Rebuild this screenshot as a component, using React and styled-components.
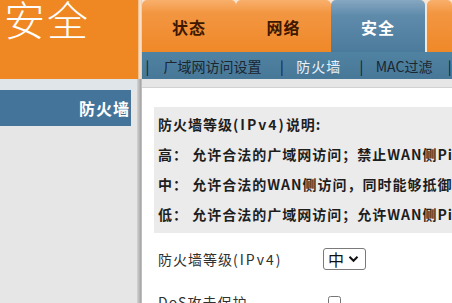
import React from "react";
import styled, { createGlobalStyle } from "styled-components";

const Global = createGlobalStyle`
  html, body { margin: 0; padding: 0; background: #ffffff; }
  body {
    width: 452px; height: 303px; overflow: hidden;
    font-family: "Noto Sans CJK SC", "Noto Sans", sans-serif;
  }
`;

const Page = styled.div`
  width: 452px;
  height: 303px;
  display: flex;
  flex-direction: column;
  overflow: hidden;
`;

const Header = styled.header`
  display: flex;
  height: 79px;
  flex: none;
`;

const Logo = styled.div`
  width: 138px;
  background: #ef8722;
  color: #ffffff;
  font-family: "Noto Sans CJK SC", serif;
  font-weight: 300;
  font-size: 41px;
  line-height: 40px;
  letter-spacing: 2px;
  padding-left: 4px;
  box-sizing: border-box;
  & > span { display: block; margin-top: -2px; }
`;

const HeaderDivider = styled.div`
  width: 4px;
  background: linear-gradient(to right, #f2b57a, #fbe6d2, #e7c9ad);
`;

const Nav = styled.nav`
  flex: 1;
  display: flex;
  flex-direction: column;
  min-width: 0;
`;

const Tabs = styled.div`
  display: flex;
  height: 52px;
  flex: none;
  background: #f7e6d6;
`;

const Tab = styled.div`
  width: ${(p) => p.$w}px;
  flex: ${(p) => (p.$grow ? 1 : "none")};
  margin-left: ${(p) => p.$ml || 0}px;
  border-radius: 5px 5px 0 0;
  display: flex;
  align-items: center;
  justify-content: center;
  padding-top: 2px;
  box-sizing: border-box;
  font-size: 16px;
  font-weight: 700;
  letter-spacing: 1px;
  color: ${(p) => (p.$active ? "#ffffff" : "#3e1800")};
  background: ${(p) =>
    p.$active
      ? "linear-gradient(#86a7c1 0%, #5f8bab 30%, #4b7b9c 100%)"
      : "linear-gradient(#f8b06c 0%, #f39642 25%, #ef8828 100%)"};
`;

const SubNav = styled.div`
  height: 27px;
  flex: none;
  background: linear-gradient(#5082a2, #487898);
  display: flex;
  align-items: center;
  padding-left: 3px;
  font-size: 14px;
  color: #1b2630;
  white-space: nowrap;
`;

const Sep = styled.span`
  width: 6px;
  text-align: center;
  color: #111a22;
`;

const SubItem = styled.span`
  padding: 0 ${(p) => p.$pr}px 0 ${(p) => p.$pl}px;
  color: ${(p) => (p.$active ? "#e9f1f7" : "#1b2630")};
  letter-spacing: ${(p) => p.$ls || 0}px;
`;

const Body = styled.div`
  flex: 1;
  display: flex;
  min-height: 0;
  overflow: hidden;
`;

const Sidebar = styled.aside`
  width: 137px;
  flex: none;
  background: #e6e6e6;
  display: flex;
  flex-direction: column;
`;

const SideBand = styled.div`
  height: 11px;
  flex: none;
  background: #e0e5e9;
`;

const SideItem = styled.div`
  width: 131px;
  height: 36px;
  flex: none;
  background: #44749a;
  color: #ffffff;
  font-size: 16px;
  font-weight: 700;
  letter-spacing: 1px;
  display: flex;
  align-items: center;
  justify-content: flex-end;
  padding-right: 1px;
  box-sizing: border-box;
`;

const Shadow = styled.div`
  width: 5px;
  flex: none;
  background: linear-gradient(to right, #d4d4d4, #a9a9a9 70%, #c8c8c8);
`;

const Content = styled.main`
  flex: 1;
  display: flex;
  flex-direction: column;
  min-width: 0;
  overflow: hidden;
  background: #ffffff;
  & > * { flex-shrink: 0; }
`;

const ContentBand = styled.div`
  height: 8px;
  background: #e6e6e6;
  border-bottom: 1px solid #d2d2d2;
`;

const InfoBox = styled.section`
  margin: 19px 0 0 12px;
  padding: 2px 0 4px 4px;
  background: #ebebeb;
  white-space: nowrap;
  overflow: hidden;
`;

const InfoLine = styled.div`
  height: 30px;
  line-height: 30px;
  font-size: 14px;
  font-weight: 600;
  letter-spacing: 1px;
  color: #1e1e1e;
`;

const Latin = styled.span`
  letter-spacing: 2px;
`;

const FormRow = styled.div`
  display: flex;
  align-items: center;
  height: 30px;
  margin-top: ${(p) => p.$mt}px;
  padding-left: 16px;
`;

const Label = styled.div`
  width: 165px;
  flex: none;
  font-size: 14px;
  letter-spacing: 1px;
  color: #303030;
  white-space: nowrap;
`;

const SelectBox = styled.div`
  display: inline-flex;
  align-items: center;
  width: 43px;
  height: 22px;
  box-sizing: border-box;
  border: 1px solid #7a7a7a;
  border-radius: 3px;
  background: #ffffff;
  padding-left: 4px;
  gap: 3px;
`;

const NativeSelect = styled.select`
  appearance: none;
  border: none;
  background: transparent;
  padding: 0;
  margin: 0;
  font-family: "Noto Sans CJK SC", sans-serif;
  font-size: 16px;
  color: #111111;
  outline: none;
  width: 17px;
`;

const Check = styled.input`
  width: 13px;
  height: 13px;
  margin: 9px 0 0 5px;
  align-self: flex-start;
`;

export default function App() {
  return (
    <Page>
      <Global />
      <Header>
        <Logo>
          <span>安全</span>
        </Logo>
        <HeaderDivider />
        <Nav>
          <Tabs>
            <Tab $w={94}>状态</Tab>
            <Tab $w={95}>网络</Tab>
            <Tab $w={94} $active>
              安全
            </Tab>
            <Tab $grow $ml={2} />
          </Tabs>
          <SubNav>
            <Sep>|</Sep>
            <SubItem $pl={14} $pr={18}>广域网访问设置</SubItem>
            <Sep>|</Sep>
            <SubItem $pl={12} $pr={18} $active $ls={1}>
              防火墙
            </SubItem>
            <Sep>|</Sep>
            <SubItem $pl={12} $pr={15}>MAC过滤</SubItem>
            <Sep>|</Sep>
          </SubNav>
        </Nav>
      </Header>
      <Body>
        <Sidebar>
          <SideBand />
          <SideItem>防火墙</SideItem>
        </Sidebar>
        <Shadow />
        <Content>
          <ContentBand />
          <InfoBox>
            <InfoLine>
              防火墙等级<Latin>(IPv4)</Latin>说明:
            </InfoLine>
            <InfoLine>高： 允许合法的广域网访问；禁止WAN侧Ping请求</InfoLine>
            <InfoLine>中： 允许合法的WAN侧访问，同时能够抵御DoS攻击</InfoLine>
            <InfoLine>低： 允许合法的广域网访问；允许WAN侧Ping请求</InfoLine>
          </InfoBox>
          <FormRow $mt={11}>
            <Label>
              防火墙等级<Latin>(IPv4)</Latin>
            </Label>
            <SelectBox>
              <NativeSelect defaultValue="中">
                <option>高</option>
                <option>中</option>
                <option>低</option>
              </NativeSelect>
              <svg width="11" height="8" viewBox="0 0 11 8">
                <path d="M1.5 1.8 L5.5 5.8 L9.5 1.8" fill="none" stroke="#111" strokeWidth="2" />
              </svg>
            </SelectBox>
          </FormRow>
          <FormRow $mt={13}>
            <Label>DoS攻击保护</Label>
            <Check type="checkbox" />
          </FormRow>
        </Content>
      </Body>
    </Page>
  );
}
